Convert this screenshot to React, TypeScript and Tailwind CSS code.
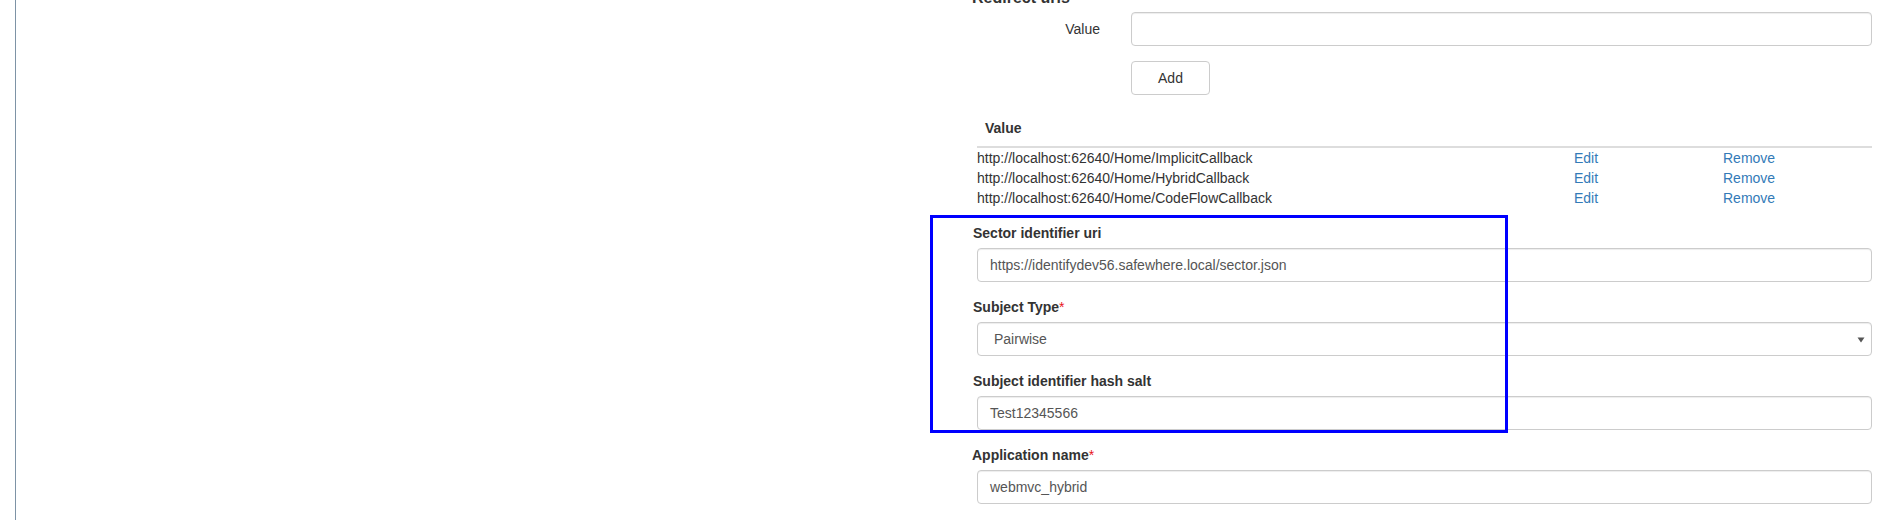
const redirectUris = [
  'http://localhost:62640/Home/ImplicitCallback',
  'http://localhost:62640/Home/HybridCallback',
  'http://localhost:62640/Home/CodeFlowCallback',
];

const inputClass =
  'flex h-[34px] items-center rounded-[4px] border border-[#ccc] bg-white px-[12px] text-[#555] shadow-[inset_0_1px_1px_rgba(0,0,0,0.075)]';

type FieldProps = {
  label: string;
  value: string;
  required?: boolean;
  select?: boolean;
  labelOffset?: string;
};

const Field = ({ label, value, required, select, labelOffset = 'ml-px' }: FieldProps) => (
  <div className="mb-[15px]">
    <div className={`${labelOffset} mb-[5px] h-[20px] font-bold`}>
      {label}
      {required ? <span className="font-normal text-[#e8141c]">*</span> : null}
    </div>
    <div className={`ml-[5px] ${inputClass} ${select ? 'justify-between pl-[16px] pr-[6px]' : ''}`}>
      <span>{value}</span>
      {select ? (
        <svg width="8" height="6" viewBox="0 0 8 6" className="mt-px">
          <path d="M0.5 0.5 H7.5 L4 5.5 Z" fill="#555" />
        </svg>
      ) : null}
    </div>
  </div>
);

export default function App() {
  return (
    <div className="relative flex h-[520px] w-full overflow-hidden bg-white font-['Liberation_Sans',Arial,sans-serif] text-[14px] leading-[20px] text-[#333]">
      <div className="ml-[15px] w-px shrink-0 bg-[#7e93a6]" />

      <div className="ml-[956px] w-[900px] shrink-0">
        <div className="-mt-[12px] h-[20px] text-[16px] font-bold leading-[20px]">Redirect uris</div>

        <div className="mt-[4px] flex items-center">
          <div className="w-[128px] text-right">Value</div>
          <div className={`ml-[31px] flex-1 ${inputClass}`} />
        </div>

        <button className="ml-[159px] mt-[15px] h-[34px] w-[79px] rounded-[4px] border border-[#ccc] bg-white text-[#333]">
          Add
        </button>

        <div className="ml-[5px] mt-[15px]">
          <div className="border-b-2 border-[#ddd] py-[8px] pl-[8px] font-bold">Value</div>
          {redirectUris.map((uri) => (
            <div key={uri} className="grid h-[20px] grid-cols-[597px_149px_1fr]">
              <span>{uri}</span>
              <span className="text-[#337ab7]">Edit</span>
              <span className="text-[#337ab7]">Remove</span>
            </div>
          ))}
        </div>

        <div className="mt-[15px]">
          <Field label="Sector identifier uri" value="https://identifydev56.safewhere.local/sector.json" />
          <Field label="Subject Type" value="Pairwise" required select />
          <Field label="Subject identifier hash salt" value="Test12345566" />
          <Field label="Application name" value="webmvc_hybrid" required labelOffset="ml-0" />
        </div>
      </div>

      <div className="pointer-events-none absolute left-[930px] top-[215px] h-[218px] w-[578px] border-[3px] border-[#0000ff]" />
    </div>
  );
}
